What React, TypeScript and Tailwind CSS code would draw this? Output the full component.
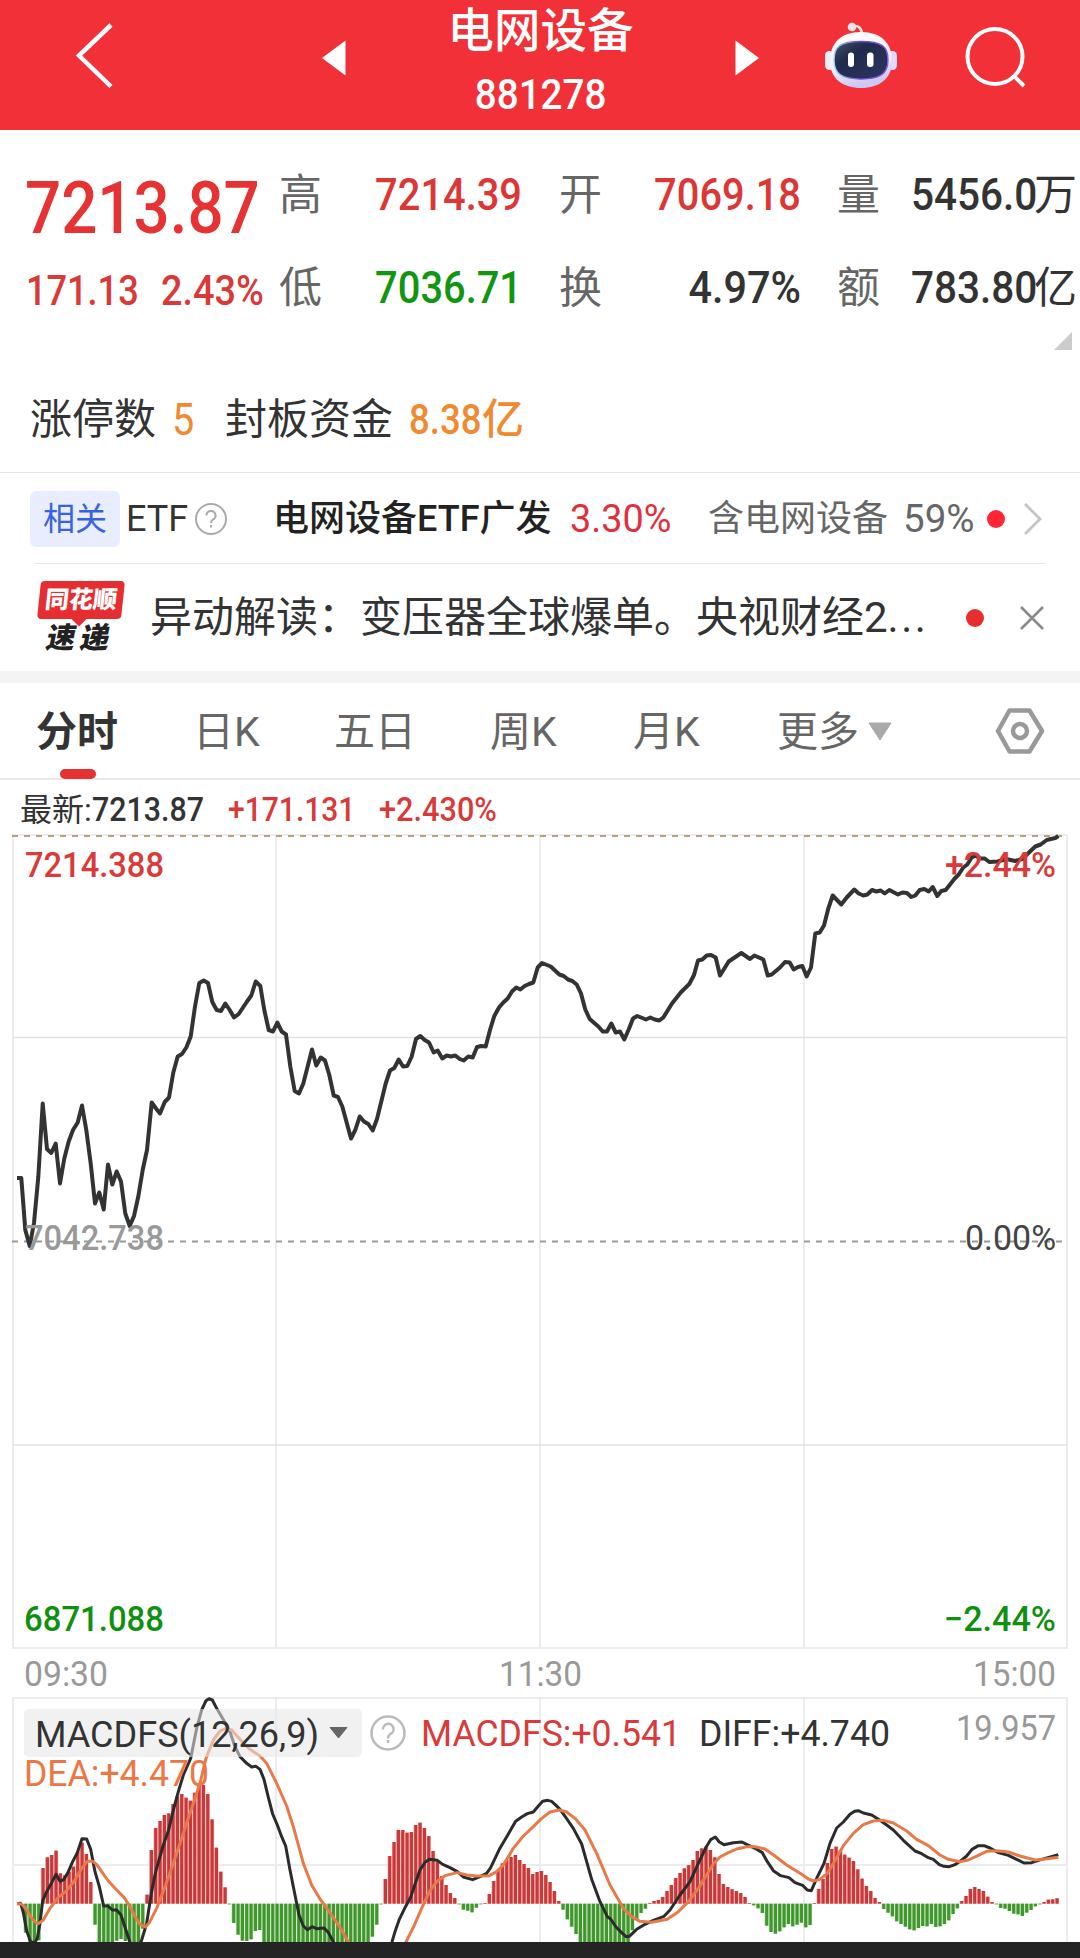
import { ReactNode } from "react"

type Point = [number, number]

const TABS = [
  { label: "日K", className: "w-[141px]" },
  { label: "五日", className: "w-[156px]" },
  { label: "周K", className: "w-[143px]" },
  { label: "月K", className: "w-[144px]" },
]

const PRICE =
  "17,1178 21.3,1178 25.3,1230 29.7,1246 34,1223 38.3,1177 42.7,1103.5 47,1149 51.3,1153 55.7,1143.5 60,1183.5 64.3,1158.5 68.7,1141.5 73,1130 77.7,1122.5 82,1105.5 86.3,1130 90.7,1163.5 95,1203.5 99.3,1192.5 103.7,1209.5 108,1164.5 112.3,1184.5 116.7,1171.5 121,1181.5 125.3,1213.5 129.7,1226 134,1216 138.3,1196.5 142.7,1170 147,1150 151.7,1102.5 156,1108.5 160,1113.5 164.7,1102 169,1097.5 173.3,1072.5 177.7,1056.5 182,1054 186.3,1047.5 190.7,1036.5 195,1006.5 199.3,983 203.7,980.5 208,983 212.3,1002 216.7,1010 221,1011 225.3,1003.5 229.7,1010 234,1017.5 238.7,1014 247,1001.5 251.3,995.5 255.7,981.5 260.3,986 264.3,1010 268.7,1030 273,1031.5 277.3,1022.5 281.7,1031.5 286,1034.5 290.3,1066.5 294.7,1091 299,1093.5 303.3,1083.5 312,1049.5 316.3,1065.5 320.7,1057.5 325,1060.5 329.3,1075 333.7,1095.5 338,1097 342.3,1106.5 351,1138.5 355.3,1130 359.7,1116.5 364,1121.5 368.3,1124 372.7,1130.5 377,1119 381.3,1101.5 385.7,1083.5 390,1070.5 394.3,1068 398.7,1059.5 403,1066.5 407.3,1066 411.7,1056.5 416,1039 420.3,1036 424.7,1040 429,1042.5 433.7,1052.5 437.7,1050.5 442.3,1058.5 446.7,1055.5 451,1056.5 455.3,1055.5 459.7,1059 463.7,1060.5 468.3,1056.5 472.7,1057.5 477,1047 481.3,1046 485.7,1046.5 490,1030 494.3,1016 499,1007.5 503.3,1002.5 507.7,998.5 512,991.5 516.3,987.5 520.3,989.5 524.7,986 529,984 533.3,982.5 537.7,967.5 542,963 550.7,966.5 559.3,974.5 563.7,976 568,979.5 572.3,981 576.7,984.5 581,993.5 585.3,1009.5 589.7,1019 598.3,1026.5 602.7,1031.5 607,1031.5 611.3,1023.5 615.7,1032.5 620,1031.5 624.3,1039.5 628.7,1029.5 633,1018.5 637.3,1016 646,1019.5 650.3,1017.5 654.7,1019.5 659.3,1020.5 663.3,1017.5 672,1003.5 680.7,992.5 689.3,984 694,975 698,960.5 702.3,959.5 706.7,955.5 711,955 715.7,957.5 720,975.5 728.7,961.5 741.3,953 750,959 754.3,955.5 763.3,959.5 767.7,975.5 771.7,974.5 780,967.5 785,962 789.7,962.5 793.7,969.5 798,967 802.3,966 806.7,976.5 811,967.5 815.3,933.5 819.7,932.5 824,925.5 828.3,908.5 832.7,895.5 837,900 841.3,904.5 846.7,897.5 854.3,889.5 858.7,893.5 863.3,895.5 867.3,894.5 872,890 876.3,891.5 880.7,890.5 884.7,893.5 889.3,890 898,894.5 902.3,892.5 907,893 911.3,897 915.3,895.5 919.7,890 924.3,889 928.7,891.5 932.7,887 937.3,896 941.3,891 945.7,890 954.7,878.5 958.7,874.5 963.3,867.5 967.3,864.5 971.7,857.5 976,855.5 980.3,858.5 984.7,858.5 989.3,862 997.7,861.5 1006.3,859 1015,861 1022.3,859 1030,851.5 1035.3,846.5 1040.7,844.5 1046.7,840 1055.3,838 1058.3,836"

// one bar per minute, in thirds of a pixel above or below the zero line
const BARS = [
  0, 0, -87, -120, -120, -110, 107, 139, 146, 159, 91, 85, 96, 111, 156, 183, 149, 65, -63, -120,
  -120, -120, -120, -111, -106, -112, -120, -120, -120, -75, 27, 161, 227, 248, 266, 271, 299, 321, 329, 318,
  309, 333, 356, 356, 329, 253, 168, 96, 49, -2, -58, -93, -111, -112, -107, -82, -79, -120, -120, -120,
  -120, -120, -120, -120, -120, -120, -120, -120, -120, -120, -120, -120, -120, -120, -120, -120, -120, -120, -120, -120,
  -120, -120, -99, -63, -2, 74, 143, 185, 221, 221, 213, 215, 236, 243, 227, 203, 158, 127, 83, 56,
  32, 17, -2, -18, -21, -26, -12, -2, 2, 29, 68, 101, 121, 131, 140, 146, 131, 119, 107, 89,
  95, 98, 86, 65, 38, 8, -18, -47, -69, -91, -120, -120, -120, -120, -120, -120, -120, -120, -120, -120,
  -120, -120, -80, -46, -28, -15, 2, 8, 11, 20, 38, 56, 77, 92, 106, 116, 131, 158, 166, 171,
  161, 139, 89, 59, 50, 43, 38, 32, 20, 2, -5, -14, -28, -66, -85, -90, -83, -71, -61, -68,
  -63, -57, -71, -64, 2, 44, 74, 122, 164, 171, 159, 147, 138, 128, 103, 75, 53, 38, 17, 5,
  -16, -27, -38, -53, -61, -69, -77, -80, -73, -67, -68, -61, -70, -68, -61, -50, -31, -14, 8, 23,
  44, 50, 44, 38, 21, 5, -2, -13, -15, -22, -30, -32, -37, -27, -19, -8, -2, 5, 12, 13, 16,
]

const shift = (points: Point[], dx: number): Point[] => points.map(([x, y]) => [x + dx, y])

const DIFF: Point[] = [
  [51, 641], [62, 640], [70, 668], [80, 722], [92, 756], [105, 757], [112, 745], [120, 700], [128, 632], [140, 605],
  [155, 578], [168, 553], [180, 574], [192, 568], [205, 545], [218, 515], [232, 488], [246, 446], [260, 447], [272, 478],
  [285, 545], [298, 590], [311, 648], [324, 648], [337, 660], [350, 660], [363, 675], [376, 715], [390, 757], [400, 775],
  [415, 775], [425, 750], [440, 700], [454, 610], [467, 545], [490, 465], [506, 420], [520, 360], [535, 305], [550, 255],
  [572, 205], [590, 115], [605, 60], [618, 32], [627, 26], [637, 30], [650, 55], [672, 92], [690, 125], [705, 170],
  [720, 200], [740, 220], [755, 231], [768, 229], [780, 238], [792, 268], [805, 322], [818, 372], [832, 405], [845, 440],
  [857, 468], [870, 540], [885, 615], [897, 675], [910, 708], [922, 719], [936, 710], [950, 716], [972, 714], [985, 727],
  [1000, 756], [1020, 820], [1150, 830],
  ...shift([
    [66, 756], [75, 725], [88, 688], [104, 655], [122, 622], [136, 580], [150, 540], [165, 517], [178, 508], [202, 511],
    [218, 523], [240, 533], [262, 545], [280, 561], [308, 569], [330, 560], [350, 550], [362, 533], [388, 478], [412, 437],
    [437, 394], [455, 381], [472, 371], [490, 366], [505, 348], [518, 334], [533, 331], [545, 334], [558, 346], [570, 358],
    [590, 386], [610, 415], [635, 462], [650, 515], [665, 568], [690, 635], [712, 680], [722, 687], [738, 711], [755, 728],
    [768, 740], [778, 739], [800, 718], [825, 703], [850, 691], [882, 679], [900, 660], [930, 615], [960, 575], [985, 520],
    [1008, 472], [1022, 449], [1036, 441], [1048, 456], [1062, 464],
  ], 1110),
  ...shift([
    [40, 458], [66, 456], [80, 463], [105, 475], [127, 488], [142, 515], [160, 542], [182, 557], [207, 563], [225, 578],
    [248, 586], [262, 600], [274, 602], [290, 565], [312, 520], [330, 460], [350, 414], [370, 396], [390, 373], [404, 364],
    [415, 362], [430, 369], [455, 375], [480, 391], [500, 405], [520, 420], [550, 451], [585, 483], [605, 491], [625, 503],
    [640, 508], [658, 524], [672, 529], [688, 530], [705, 524], [720, 514], [740, 498], [756, 478], [775, 467], [792, 467],
    [810, 474], [835, 488], [865, 496], [890, 508], [912, 519], [935, 518], [965, 508], [1015, 494],
  ], 2160),
]

const DEA: Point[] = [
  [51, 641], [64, 642], [78, 655], [92, 680], [105, 696], [115, 701], [130, 690], [150, 655], [175, 622], [200, 602],
  [225, 570], [245, 535], [262, 514], [278, 514], [290, 523], [305, 545], [325, 573], [350, 600], [372, 622], [390, 650],
  [405, 680], [420, 703], [436, 711], [448, 698], [470, 655], [495, 590], [520, 520], [560, 400], [600, 280], [618, 205],
  [640, 150], [660, 123], [678, 115], [695, 120], [720, 148], [750, 178], [780, 198], [800, 220], [830, 280], [860, 348],
  [880, 410], [910, 520], [935, 585], [960, 627], [990, 668], [1020, 712], [1045, 756], [1080, 830], [1180, 830],
  ...shift([
    [108, 756], [130, 712], [155, 655], [178, 605], [200, 575], [225, 557], [262, 548], [290, 555], [320, 558], [358, 557],
    [380, 545], [400, 525], [430, 475], [460, 438], [490, 410], [515, 385], [540, 366], [568, 360], [590, 366], [615, 385],
    [645, 420], [680, 490], [720, 585], [760, 655], [785, 680], [810, 694], [845, 697], [892, 688], [925, 665], [955, 635],
    [985, 595], [1010, 555], [1030, 522],
  ], 1110),
  ...shift([
    [0, 501], [25, 488], [50, 477], [80, 470], [105, 470], [135, 477], [165, 498], [200, 525], [245, 553], [265, 567],
    [280, 573], [300, 568], [322, 550], [345, 512], [370, 467], [400, 430], [430, 404], [460, 393], [490, 391], [520, 399],
    [560, 423], [590, 448], [625, 467], [660, 495], [685, 508], [720, 515], [745, 510], [775, 496], [800, 484], [830, 482],
    [865, 486], [900, 498], [945, 510], [975, 507], [1015, 502],
  ], 2160),
]

interface LabelProps {
  x: number
  y: number
  width: number
  fill: string
  size?: number
  weight?: number
  children: ReactNode
}

function Label({ x, y, width, fill, size = 35, weight = 500, children }: LabelProps) {
  return (
    <text x={x} y={y} textLength={width} lengthAdjust="spacingAndGlyphs" fill={fill} fontSize={size} fontWeight={weight}>
      {children}
    </text>
  )
}

function Header() {
  return (
    <header className="flex h-[130px] items-start bg-[#f23038] text-white">
      <svg className="ml-[74px] mt-[22px] h-[68px] w-[42px]" viewBox="0 0 42 68" fill="none">
        <path d="M37 3 5 33.500l32 31" stroke="white" strokeWidth="4.500" />
      </svg>
      <svg className="ml-[206px] mt-[40px] h-[36px] w-[24px]" viewBox="0 0 24 36">
        <path d="M23.500.5v35L0 18z" fill="white" />
      </svg>
      <div className="flex w-[389px] flex-col items-center">
        <h1 className="h-[62px] whitespace-nowrap text-[46.500px] font-medium leading-[62px]">电网设备</h1>
        <span className="inline-block h-[60px] scale-x-[0.92] text-[42px] font-medium leading-[66px]">881278</span>
      </div>
      <svg className="mt-[40px] h-[36px] w-[24px]" viewBox="0 0 24 36">
        <path d="M.5.5v35L24 18z" fill="white" />
      </svg>
      <svg className="ml-[65px] mt-[20px] h-[70px] w-[74px]" viewBox="0 0 74 70">
        <defs>
          <linearGradient id="shell" x1="0" y1="0" x2="0.3" y2="1">
            <stop offset="0" stopColor="#ffffff" />
            <stop offset="0.65" stopColor="#f1eefb" />
            <stop offset="1" stopColor="#cdc7f3" />
          </linearGradient>
          <linearGradient id="visor" x1="0" y1="0" x2="1" y2="1">
            <stop offset="0" stopColor="#46506e" />
            <stop offset="0.35" stopColor="#202a4a" />
            <stop offset="1" stopColor="#2b3765" />
          </linearGradient>
          <linearGradient id="rim" x1="0" y1="0" x2="1" y2="0">
            <stop offset="0" stopColor="#9adcf0" />
            <stop offset="0.5" stopColor="#6a45c9" />
            <stop offset="1" stopColor="#8a5bea" />
          </linearGradient>
        </defs>
        <path d="M29 6.500c5-2 9 2 9 8" stroke="#f3dfe8" strokeWidth="2.600" fill="none" />
        <circle cx="28" cy="7" r="4.300" fill="#f5e6ee" />
        <rect x="1" y="31" width="9" height="19" rx="4.500" fill="#efecfb" />
        <rect x="64" y="31" width="9" height="19" rx="4.500" fill="#e2daf8" />
        <path d="M37 12c20 0 31 11 31 29S55 68 37 68 6 59 6 41s11-29 31-29z" fill="url(#shell)" />
        <path
          d="M37 21.500c21 0 27 5 27 18.500 0 14-8 19-27 19s-27-5-27-19c0-13.500 6-18.500 27-18.500z"
          fill="url(#visor)"
          stroke="url(#rim)"
          strokeWidth="1.400"
        />
        <rect x="24" y="32.500" width="6" height="14.500" rx="3" fill="white" />
        <rect x="43" y="32.500" width="6.500" height="14.500" rx="3" fill="white" />
      </svg>
      <svg className="ml-[66px] mt-[26px] h-[64px] w-[64px]" viewBox="0 0 64 64" fill="none" stroke="white" strokeWidth="4">
        <circle cx="31" cy="30.500" r="27.500" />
        <path d="m50 50 10 10" />
      </svg>
    </header>
  )
}

function QuoteCell({ label, className, children }: { label: string; className: string; children: ReactNode }) {
  return (
    <div className={`flex h-[52px] items-center whitespace-nowrap leading-[52px] ${className}`}>
      <span className="w-[44px] shrink-0 text-[43px] text-[#666]">{label}</span>
      {children}
    </div>
  )
}

function Quote() {
  const value = "inline-block grow origin-right scale-x-[0.885] text-right text-[45px] font-medium"
  return (
    <section className="h-[342px]">
      <div className="flex h-[229px] whitespace-nowrap">
        <div className="w-[279px] shrink-0 pl-[25px] pt-[38px] text-[#e63232]">
          <div className="h-[78px] w-[232px] origin-left scale-x-[0.872] text-[73px] font-medium leading-[80px]">7213.87</div>
          <div className="mt-[23px] flex h-[42px] text-[42px] font-medium leading-[43px] text-[#d83a3a]">
            <span className="ml-px w-[135px] origin-left scale-x-[0.86]">171.13</span>
            <span className="origin-left scale-x-[0.9]">2.43%</span>
          </div>
        </div>
        <div className="grid content-start gap-y-[41px] pt-[39px]">
          <div className="flex">
            <QuoteCell label="高" className="w-[243px] text-[#dc3737]"><span className={value}>7214.39</span></QuoteCell>
            <QuoteCell label="开" className="ml-[37px] w-[242px] text-[#dc3737]"><span className={value}>7069.18</span></QuoteCell>
            <QuoteCell label="量" className="ml-[36px] text-[#333]">
              <span className="ml-[30px] w-[123px] origin-left scale-x-[0.9] text-[45px] font-medium">5456.0</span>
              <span className="text-[43px]">万</span>
            </QuoteCell>
          </div>
          <div className="flex">
            <QuoteCell label="低" className="w-[243px] text-[#109610]"><span className={value}>7036.71</span></QuoteCell>
            <QuoteCell label="换" className="ml-[37px] w-[242px] text-[#333]">
              <span className="inline-block grow origin-right scale-x-[0.92] text-right text-[45px] font-medium">4.97%</span>
            </QuoteCell>
            <QuoteCell label="额" className="ml-[36px] text-[#333]">
              <span className="ml-[30px] w-[123px] origin-left scale-x-[0.9] text-[45px] font-medium">783.80</span>
              <span className="text-[43px]">亿</span>
            </QuoteCell>
          </div>
        </div>
      </div>
      <div className="flex h-0 justify-end pr-2">
        <svg className="-mt-[27px] h-[18px] w-[18px]" viewBox="0 0 18 18">
          <path d="M18 0v18H0z" fill="#ccc" />
        </svg>
      </div>
      <div className="flex h-[113px] items-start pl-[30px] pt-[34px] text-[42px] leading-[54px] text-[#333]">
        <span className="w-[142px]">涨停数</span>
        <span className="w-[53px] origin-left scale-x-[0.9] text-[44px] text-[#f08a30]">5</span>
        <span className="w-[184px]">封板资金</span>
        <span className="w-[73px] origin-left scale-x-[0.87] font-medium text-[#f08a30]">8.38</span>
        <span className="font-medium text-[#f08a30]">亿</span>
      </div>
    </section>
  )
}

function EtfRow() {
  return (
    <div className="flex h-[90px] items-center whitespace-nowrap pl-[30px] pt-px text-[36px] leading-[56px] text-[#333]">
      <span className="w-[90px] rounded-md bg-[#e8eeff] text-center text-[32px] leading-[56px] text-[#3a62e0]">相关</span>
      <span className="ml-[6px] w-[68px] text-[36px]">ETF</span>
      <svg className="h-[34px] w-[34px]" viewBox="0 0 34 34" fill="none" stroke="#aaa" strokeWidth="2">
        <circle cx="17" cy="17" r="15" />
        <path d="M12.500 13.500a4.500 4.500 0 1 1 6.500 4c-1.500.9-2 1.700-2 3.500M17 23v2.500" />
      </svg>
      <span className="ml-[45px] w-[297px] font-medium text-[#222]">电网设备ETF广发</span>
      <span className="w-[138px] origin-left scale-x-[0.97] text-[39px] text-[#e03040]">3.30%</span>
      <span className="w-[195px] text-[#666]">含电网设备</span>
      <span className="w-[84px] origin-left text-[38.500px] text-[#666]">59%</span>
      <span className="h-[18px] w-[18px] rounded-full bg-[#ff2636]" />
      <svg className="ml-[18px] h-[34px] w-[20px]" viewBox="0 0 20 34" fill="none">
        <path d="m2 2 15 15L2 32" stroke="#c4c4c4" strokeWidth="2.800" />
      </svg>
    </div>
  )
}

function NewsRow() {
  return (
    <div className="flex h-[107px] items-center whitespace-nowrap pl-[37px] text-[#333]">
      <div className="-mt-px w-[88px] shrink-0 text-center font-black">
        <div className="relative mx-[2px] h-[38px] text-[24px] leading-[38px] text-white">
          <div className="absolute inset-0 -skew-x-6 rounded-[4px] bg-[#e62e32]" />
          <div className="absolute -bottom-[5px] left-[34px] h-3 w-3 rotate-45 bg-[#e62e32]" />
          <span className="relative inline-block -skew-x-6">同花顺</span>
        </div>
        <div className="mt-[4px] h-[30px] -skew-x-12 text-[29px] leading-[30px] tracking-[5px] text-[#222]">速递</div>
      </div>
      <span className="ml-[25px] w-[816px] pt-px text-[42px] leading-[56px]">
        异动解读：变压器全球爆单。央视财经2<span className="tracking-[2.500px]">...</span>
      </span>
      <span className="h-[18px] w-[18px] rounded-full bg-[#e62e2e]" />
      <svg className="ml-[35px] h-[26px] w-[26px]" viewBox="0 0 26 26" fill="none">
        <path d="m2 2 22 22M24 2 2 24" stroke="#8a8a8a" strokeWidth="2.600" />
      </svg>
    </div>
  )
}

function Tabs() {
  return (
    <nav className="flex h-[97px] items-start whitespace-nowrap border-b-2 border-[#e9e9e9] pl-[36px] text-[41px] leading-[98px] text-[#666]">
      <div className="relative w-[157px] font-bold text-[#333]">
        分时
        <span className="absolute left-[24px] top-[86px] h-[10px] w-[36px] rounded-[5px] bg-[#e63232]" />
      </div>
      {TABS.map((tab) => (
        <span key={tab.label} className={tab.className}>{tab.label}</span>
      ))}
      <span className="w-[91px]">更多</span>
      <svg className="mt-[39px] h-[19px] w-[24px]" viewBox="0 0 24 19">
        <path d="M1 1h22L12 18z" fill="#aaa" stroke="#aaa" strokeLinejoin="round" />
      </svg>
      <svg className="ml-[102px] mt-[24px] h-[48px] w-[52px]" viewBox="0 0 52 48" fill="none" stroke="#999" strokeWidth="4.500">
        <path d="M15.500 3.500h20L48 24 35.500 44.500h-20L4 24z" strokeLinejoin="round" />
        <circle cx="26" cy="24" r="7" />
      </svg>
    </nav>
  )
}

function PriceChart() {
  return (
    <svg className="block h-[865px] w-[1080px]" viewBox="0 830 1080 865" fill="none">
      <path d="M13 835H1067V1648H13zM276 835V1648M540 835V1648M804 835V1648" stroke="#ececec" strokeWidth="2" />
      <path d="M13 1037.500H1067M13 1445H1067" stroke="#e2e2e2" strokeWidth="1.300" />
      <path d="M12 836H1062" stroke="#b8a27c" strokeWidth="2" strokeDasharray="6 6" />
      <path d="M12 1241.500H1067" stroke="#999" strokeWidth="2" strokeDasharray="6 6" />
      <polyline points={PRICE} stroke="#333" strokeWidth="4" strokeLinejoin="round" />
      <Label x={25} y={877} width={139} fill="#d93a3a">7214.388</Label>
      <Label x={945} y={877} width={111} fill="#d93a3a">+2.44%</Label>
      <Label x={25} y={1250} width={139} fill="#999">7042.738</Label>
      <Label x={965} y={1250} width={91} fill="#444" weight={400}>0.00%</Label>
      <Label x={24} y={1631} width={140} fill="#109010">6871.088</Label>
      <Label x={944} y={1631} width={112} fill="#109010">−2.44%</Label>
      <Label x={24} y={1686} width={84} fill="#999" weight={400}>09:30</Label>
      <Label x={499} y={1686} width={83} fill="#999" weight={400}>11:30</Label>
      <Label x={973} y={1686} width={83} fill="#999" weight={400}>15:00</Label>
    </svg>
  )
}

function MacdChart() {
  return (
    <svg className="block h-[247px] w-[1080px]" viewBox="0 5 1080 247" fill="none">
      <path d="M13 260V8H1067V260M276 8V252M540 8V252M804 8V252M13 175H1067" stroke="#ececec" strokeWidth="2" />
      <g transform="scale(0.33333)">
        {BARS.map((value, i) => {
          const x = 51 + i * 13
          const y = value > 0 ? 641 - value : 641
          const h = Math.abs(value)
          return (
            <g key={i}>
              <rect x={x - 6.5} y={y} width="13" height={h} fill={value > 0 ? "#ffb0b0" : "#b8eaa8"} />
              <rect x={x - 4.5} y={y} width="9.500" height={h} fill={value > 0 ? "#c53b3b" : "#459433"} />
            </g>
          )
        })}
        <g strokeWidth="9" strokeLinejoin="round">
          <polyline points={DIFF.join(" ")} stroke="#2b2b2b" />
          <polyline points={DEA.join(" ")} stroke="#e87a4a" />
        </g>
      </g>
      <rect x="24" y="19" width="338" height="48" rx="5" fill="#e6e6e6" fillOpacity="0.560" />
      <Label x={35} y={57} width={284} fill="#333" size={36} weight={400}>MACDFS(12,26,9)</Label>
      <path d="M330 37.500h17L338.500 48z" fill="#666" stroke="#666" strokeLinejoin="round" />
      <g stroke="#bbb" strokeWidth="2.500">
        <circle cx="388" cy="43" r="16.500" />
        <path d="M383 39.500a5.300 5.300 0 1 1 7.500 4.500c-2 1-2.500 2-2.500 4.500M388 50v3" />
      </g>
      <Label x={421} y={56} width={260} fill="#d93a3a" size={36} weight={400}>MACDFS:+0.541</Label>
      <Label x={699} y={56} width={191} fill="#333" size={36} weight={400}>DIFF:+4.740</Label>
      <Label x={956} y={50} width={100} fill="#999" weight={400}>19.957</Label>
      <Label x={24} y={96} width={185} fill="#ec7745" size={36} weight={400}>DEA:+4.470</Label>
    </svg>
  )
}

export default function App() {
  return (
    <div className="h-[1958px] w-[1080px] overflow-hidden bg-white font-['Roboto','Noto_Sans_CJK_SC',sans-serif]">
      <Header />
      <Quote />
      <div className="h-px bg-[#e8e8e8]" />
      <EtfRow />
      <div className="mx-[35px] h-px bg-[#e8e8e8]" />
      <NewsRow />
      <div className="h-[12px] bg-[#f4f4f4]" />
      <Tabs />
      {/* Latest price */}
      <div className="flex h-[50px] whitespace-nowrap pl-[20px] text-[33px] font-medium leading-[60px] text-[#d83a3a]">
        <span className="text-[32px] font-normal text-[#333]">最新:</span>
        <span className="w-[136px] origin-left scale-x-[0.92] text-[#333]">7213.87</span>
        <span className="w-[151px] origin-left scale-x-[0.91]">+171.131</span>
        <span className="origin-left scale-x-[0.93]">+2.430%</span>
      </div>
      <PriceChart />
      <MacdChart />
      <div className="h-[16px] bg-[#242424]" />
    </div>
  )
}
